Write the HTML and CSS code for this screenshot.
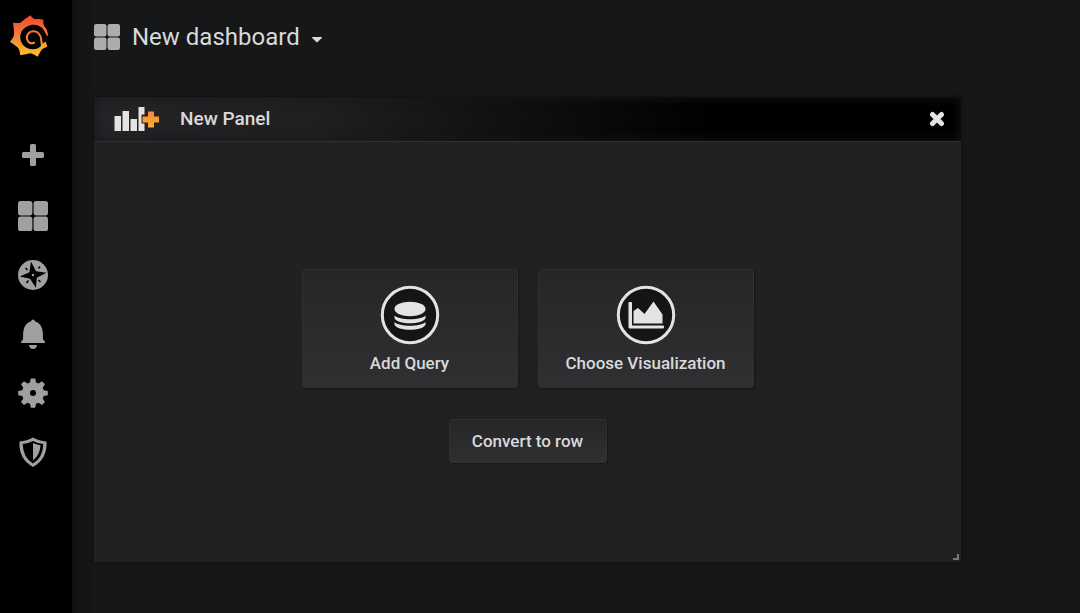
FILE: index.html
```html
<!DOCTYPE html>
<html lang="en">
<head>
<meta charset="utf-8">
<title>New dashboard</title>
<link rel="stylesheet" href="styles.css">
</head>
<body>
<div class="app">
  <nav class="sidemenu" aria-label="Main menu">
    <a class="logo" href="#" aria-label="Home">
      <svg viewBox="28 43 120 126" width="40" height="42" aria-hidden="true">
        <defs><linearGradient id="flame" gradientUnits="userSpaceOnUse" x1="0" y1="44" x2="0" y2="168"><stop offset="0" stop-color="#f0482a"/><stop offset=".45" stop-color="#f5793a"/><stop offset="1" stop-color="#fbc52c"/></linearGradient></defs>
        <path fill="url(#flame)" d="M92 44Q98 53 106 56Q117 53 131 57Q130 67 133 76Q144 86 145 104L143 106L138 108L137 120Q140 128 143 138Q132 141 126 147Q120 156 114 168Q102 160 93 158Q79 161 62 164Q61 151 56 142Q46 133 31 123Q41 113 43 104Q44 88 40 66Q54 68 62 66Q74 56 92 44Z"/>
        <path fill="#000" d="M147 112Q140 104 137 97C130 78 112 69 94 73C72 78 60 94 62 113C64 133 80 146 99 146C112 146 122 140 128 130Q137 122 139 122L150 122Z"/>
        <path class="swirl" d="M128 140C126 132 126 126 125 119C124 100 112 91 101 92C87 93 80 103 82 114C84 126 95 131 103 126"/>
      </svg>
    </a>
    <div class="create">
      <a href="#" aria-label="Create"><svg viewBox="0 0 30 30" width="30" height="30" aria-hidden="true"><path d="M13.500 4h3q1.500 0 1.500 1.500V12h6.500q1.500 0 1.500 1.500v3q0 1.500-1.500 1.500H18v6.500q0 1.500-1.500 1.500h-3q-1.500 0-1.500-1.500V18H5.500Q4 18 4 16.500v-3Q4 12 5.500 12H12V5.500Q12 4 13.500 4z"/></svg></a>
    </div>
    <div class="links">
      <a href="#" aria-label="Dashboards"><svg viewBox="0 0 30 30" width="30" height="30" aria-hidden="true"><rect width="14.400" height="14.400" rx="2.600"/><rect x="15.600" width="14.400" height="14.400" rx="2.600"/><rect y="15.600" width="14.400" height="14.400" rx="2.600"/><rect x="15.600" y="15.600" width="14.400" height="14.400" rx="2.600"/></svg></a>
      <a href="#" aria-label="Explore"><svg viewBox="0 0 30 30" width="30" height="30" aria-hidden="true"><circle cx="15" cy="15" r="15"/><path class="cut" d="M13 1.500L18 11.200L28.500 12.800L18.800 17.800L18 28L12 18.800L1.800 16.500L11.400 12.200Z"/><path class="needles" d="M20.500 8.500l1.500-2M9.500 10l-2-2M20.500 20l2 2M10.500 20.500l-2 2.500"/><circle cx="15" cy="15" r="1.200"/></svg></a>
      <a href="#" aria-label="Alerting"><svg viewBox="0 0 30 30" width="30" height="30" aria-hidden="true"><path d="M15 .500q1.500 0 1.900 1.700Q24 4.500 24.800 13L25 20.500Q27 21.500 27 24H3Q3 21.500 5 20.500L5.200 13Q6 4.500 13.100 2.200Q13.500.500 15 .500zM11 26h8q-.500 4-4 4t-4-4z"/></svg></a>
      <a href="#" aria-label="Configuration"><svg viewBox="0 0 30 30" width="30" height="30" aria-hidden="true"><path fill-rule="evenodd" d="M12.800.500h4.400l.8 4 2.500 1 3.500-2.300 3 3-2.300 3.500 1 2.500 4.100.8v4.200l-4.100.8-1 2.500 2.300 3.500-3 3-3.500-2.300-2.500 1-.8 4.100h-4.400l-.8-4.100-2.500-1L6 27l-3-3 2.300-3.500-1-2.500-4.100-.8V13l4.100-.8 1-2.500L3 6.200l3-3 3.500 2.300 2.500-1zM15 12a3 3 0 1 0 0 6 3 3 0 0 0 0-6z"/></svg></a>
      <a href="#" aria-label="Server admin"><svg viewBox="0 0 30 30" width="30" height="30" aria-hidden="true"><path fill-rule="evenodd" d="M15 .500Q21 4 28.500 4.500Q29.500 22 15 30Q.500 22 1.500 4.500Q9 4 15 .500zM15 4Q9.500 6.800 4.700 7Q5 20.500 15 26.500Q25 20.500 25.300 7Q20.500 6.800 15 4z"/><path d="M15 6Q19 7.700 22.500 8.300Q22 18 15 23.500z"/></svg></a>
    </div>
  </nav>
  <main class="main">
    <header class="navbar">
      <button class="title" type="button">
        <svg class="title-icon" viewBox="0 0 30 30" width="26" height="26" aria-hidden="true"><rect width="14.400" height="14.400" rx="2.600"/><rect x="15.600" width="14.400" height="14.400" rx="2.600"/><rect y="15.600" width="14.400" height="14.400" rx="2.600"/><rect x="15.600" y="15.600" width="14.400" height="14.400" rx="2.600"/></svg>
        <span>New dashboard</span>
        <svg class="caret" viewBox="0 0 10 6" width="10" height="6" aria-hidden="true"><path d="M.500 0h9q.800.300 0 1.200L5.600 5q-.600.500-1.200 0L.500 1.200Q-.300.300.500 0z"/></svg>
      </button>
    </header>
    <section class="panel" aria-labelledby="panel-title">
      <header class="panel-header">
        <svg class="panel-icon" viewBox="0 0 46 26" width="46" height="26" aria-hidden="true">
          <defs><linearGradient id="amber" x1="0" y1="0" x2="0" y2="1"><stop offset="0" stop-color="#f5873a"/><stop offset="1" stop-color="#f9ae32"/></linearGradient></defs>
          <path fill="#e3e3e3" d="M1.500 10h6.500v15H1.500zM9.500 5h6.500v20H9.500zM17.500 13h6.500v12h-6.500zM25.500 1h6v7.500h-3v9h3v7.500h-6z"/>
          <path fill="url(#amber)" d="M35 5.500h6v5h5v6h-5v5h-6v-5h-5.500v-6h5.500z"/>
        </svg>
        <h1 class="panel-title" id="panel-title">New Panel</h1>
        <button class="close" type="button" aria-label="Close"><svg viewBox="0 0 16 16" width="16" height="16" aria-hidden="true"><path d="M3.500 3.500l9 9M12.500 3.500l-9 9"/></svg></button>
      </header>
      <div class="panel-body">
        <div class="cards">
          <button class="btn card" type="button">
            <svg viewBox="0 0 60 60" width="60" height="60" aria-hidden="true"><circle class="ring" cx="30" cy="30" r="27.700"/><path d="M14.500 37v2.500c2 7 29 7 31 0V37c-5 5-26 5-31 0zM14.500 30.500V33c2 7 29 7 31 0v-2.500c-5 5-26 5-31 0z"/><ellipse cx="30" cy="24" rx="15.500" ry="7.300"/></svg>
            <span>Add Query</span>
          </button>
          <button class="btn card" type="button">
            <svg viewBox="0 0 60 60" width="60" height="60" aria-hidden="true"><circle class="ring" cx="30" cy="30" r="27.700"/><path d="M13 17h2q1 0 1 1v22.500h31q1 0 1 1v1q0 1-1 1H14q-1.500 0-1.500-1.500V18q0-1 .5-1zM17.500 38.500V26l4.500-3 6.500 6 9-12.500 9 13v9z"/></svg>
            <span>Choose Visualization</span>
          </button>
        </div>
        <button class="btn convert" type="button">Convert to row</button>
      </div>
      <svg class="resize" viewBox="0 0 8 8" width="8" height="8" aria-hidden="true"><path d="M6 1v5H1"/></svg>
    </section>
  </main>
</div>
</body>
</html>
```
FILE: styles.css
```css
* { box-sizing: border-box; }

body {
  margin: 0;
  background: #161719;
  color: #d8d9da;
  font-family: Roboto, "Liberation Sans", sans-serif;
}

button {
  border: 0;
  padding: 0;
  background: none;
  color: inherit;
  font: inherit;
  cursor: pointer;
}

svg { display: block; }

.app {
  display: flex;
  min-height: 100vh;
}

.sidemenu {
  flex: 0 0 72px;
  padding-top: 15px;
  background: #000;
  fill: #9fa0a1;
}

.logo {
  display: block;
  margin-left: 9px;
}

.swirl {
  fill: none;
  stroke: url(#flame);
  stroke-width: 6;
  stroke-linecap: round;
}

.create {
  margin: 83px 0 31px 18px;
}

.links {
  display: grid;
  gap: 29px;
  margin-left: 18px;
}

.sidemenu .cut { fill: #000; }

.needles {
  stroke: #000;
  stroke-width: 1.5;
}

.main {
  flex: 1;
  min-width: 0;
  padding: 15px 119px 51px 22px;
  background: linear-gradient(90deg, #0e1012, #161719 24px);
  display: flex;
  flex-direction: column;
  gap: 38px;
}

.navbar { display: flex; }

.title {
  display: flex;
  align-items: center;
  gap: 12px;
  height: 44px;
  font-size: 24px;
}

.title-icon { fill: #acacad; }

.caret {
  fill: #d8d9da;
  margin-top: 6px;
}

.panel {
  position: relative;
  flex: 1;
  display: flex;
  flex-direction: column;
  background: #212124;
  box-shadow: 0 0 3px #0c0d0e;
}

.panel-header {
  display: flex;
  align-items: center;
  height: 45px;
  padding: 0 16px 0 19px;
  border-bottom: 1px solid #303033;
  background: linear-gradient(90deg, #242427 0%, #1f1f21 26%, #000 72%);
  box-shadow: inset 0 0 12px #161719;
}

.panel-title {
  flex: 1;
  margin: 0 0 0 21px;
  font-size: 19px;
  line-height: 22px;
  font-weight: 500;
}

.close svg {
  fill: none;
  stroke: #e3e3e3;
  stroke-width: 5;
  stroke-linecap: round;
}

.panel-body {
  flex: 1;
  display: flex;
  flex-direction: column;
  align-items: center;
  justify-content: center;
  gap: 31px;
  padding-top: 28px;
}

.cards {
  display: flex;
  gap: 20px;
}

.btn {
  border: 1px solid #303033;
  border-radius: 3px;
  background: linear-gradient(#262628, #303033);
  box-shadow: 1px 1px 2px #161719;
  font-weight: 500;
  font-size: 17px;
}

.card {
  display: flex;
  flex-direction: column;
  align-items: center;
  gap: 8px;
  width: 216px;
  height: 119px;
  padding-top: 15px;
  fill: #e3e3e3;
}

.ring {
  fill: #141517;
  stroke: #e3e3e3;
  stroke-width: 3;
}

.convert {
  width: 158px;
  height: 44px;
}

.resize {
  position: absolute;
  right: 1px;
  bottom: 1px;
  fill: none;
  stroke: #77787a;
  stroke-width: 2;
}
```
